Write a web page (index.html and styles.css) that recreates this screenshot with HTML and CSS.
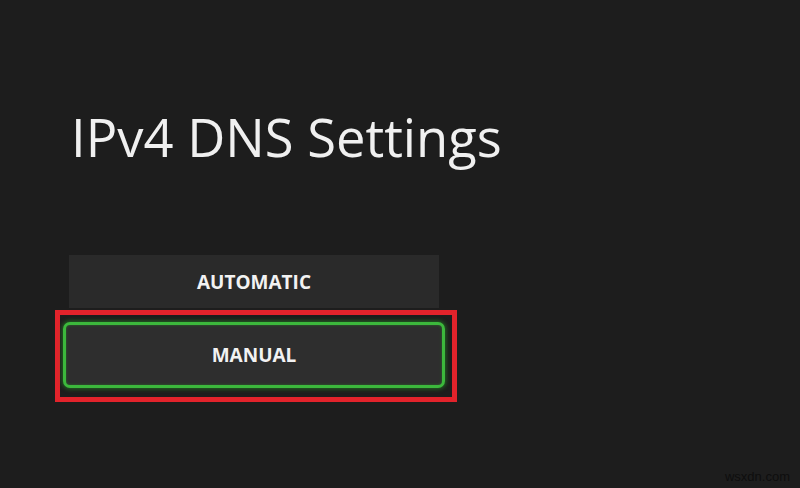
FILE: index.html
```html
<!DOCTYPE html>
<html lang="en">
<head>
<meta charset="utf-8">
<title>IPv4 DNS Settings</title>
<link rel="stylesheet" href="styles.css">
</head>
<body>
<main class="screen">
  <h1 class="title">IPv4 DNS Settings</h1>
  <div class="options">
    <button class="option option-auto">AUTOMATIC</button>
    <div class="highlight">
      <button class="option option-manual">MANUAL</button>
    </div>
  </div>
  <span class="watermark">wsxdn.com</span>
</main>
</body>
</html>
```
FILE: styles.css
```css
html, body {
  margin: 0;
  padding: 0;
  background: #1d1d1d;
}
.screen {
  position: relative;
  width: 800px;
  height: 488px;
  overflow: hidden;
  display: flex;
  flex-direction: column;
  font-family: "Open Sans", "Liberation Sans", sans-serif;
}
.title {
  margin: 110px 0 0 71px;
  font-size: 52.5px;
  line-height: 54px;
  font-weight: 400;
  color: #f0f0f0;
  letter-spacing: 0;
}
.options {
  margin: 91px 0 0 55px;
  width: 402px;
  display: flex;
  flex-direction: column;
}
.option {
  display: flex;
  align-items: center;
  justify-content: center;
  font-family: "Open Sans", "Liberation Sans", sans-serif;
  font-weight: 700;
  font-size: 19px;
  color: #f2f2f2;
  padding: 0;
  border: none;
}
.option-auto {
  margin-left: 14px;
  width: 370px;
  height: 53px;
  background: #2a2a2a;
}
.highlight {
  margin-top: 2px;
  border: 5px solid #e2232b;
  padding: 7px 7px 9px 3px;
}
.option-manual {
  width: 100%;
  height: 66px;
  background: #2e2e2e;
  border: 3px solid #3cb83c;
  border-radius: 7px;
  box-shadow: 0 0 4px 1px rgba(40, 170, 40, 0.55), inset 0 0 3px rgba(40, 170, 40, 0.5);
}
.watermark {
  position: absolute;
  right: 10px;
  bottom: 4px;
  font-family: "Liberation Sans", sans-serif;
  font-size: 13px;
  color: #0e0e0e;
}
```
